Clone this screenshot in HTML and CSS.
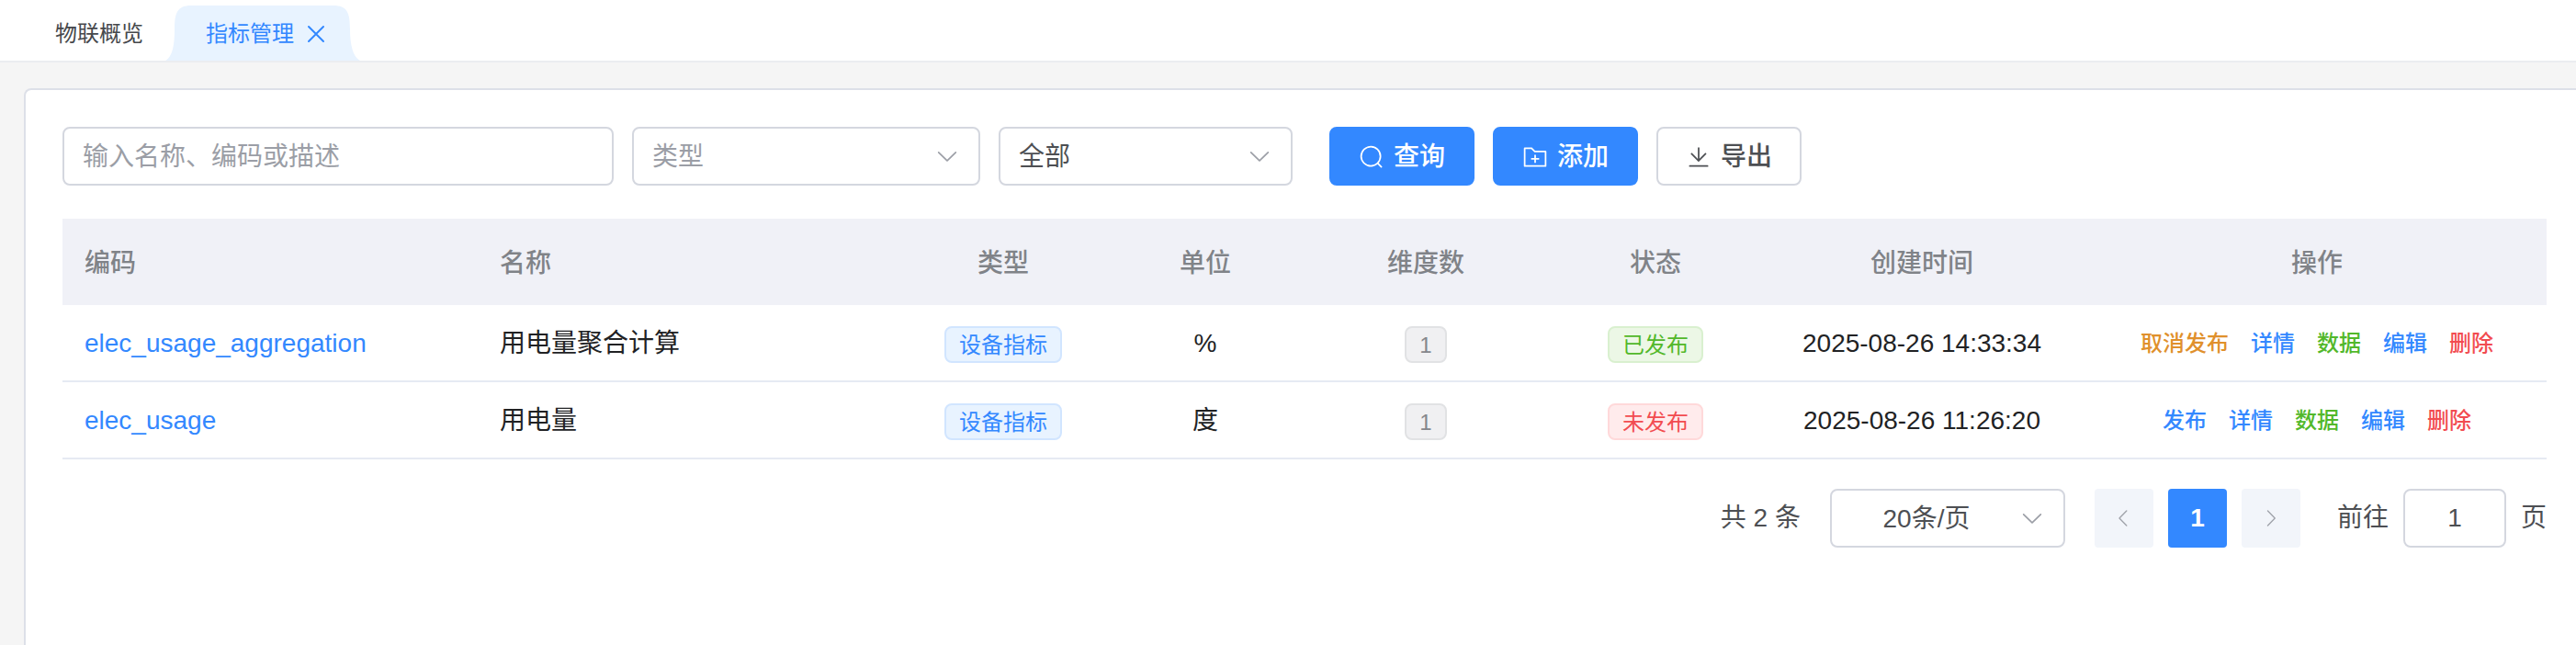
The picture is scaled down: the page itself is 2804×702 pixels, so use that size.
FILE: index.html
```html
<!DOCTYPE html>
<html lang="zh-CN">
<head>
<meta charset="utf-8">
<meta name="viewport" content="width=device-width, initial-scale=1">
<title>指标管理</title>
<link rel="stylesheet" href="styles.css">
</head>
<body>
<svg class="sprite" aria-hidden="true">
  <symbol id="arrow-down" viewBox="0 0 1024 1024"><path d="M831.872 340.864 512 652.672 192.128 340.864a30.592 30.592 0 0 0-42.752 0 29.12 29.12 0 0 0 0 41.6L489.664 714.24a32 32 0 0 0 44.672 0l340.288-331.712a29.12 29.12 0 0 0 0-41.728 30.592 30.592 0 0 0-42.752 0z"/></symbol>
  <symbol id="arrow-left" viewBox="0 0 1024 1024"><path d="M609.408 149.376 277.76 489.6a32 32 0 0 0 0 44.672l331.648 340.352a29.12 29.12 0 0 0 41.728 0 30.592 30.592 0 0 0 0-42.752L339.264 511.936l311.872-319.872a30.592 30.592 0 0 0 0-42.688 29.12 29.12 0 0 0-41.728 0z"/></symbol>
  <symbol id="arrow-right" viewBox="0 0 1024 1024"><path d="M340.864 149.312a30.592 30.592 0 0 0 0 42.752L652.736 512 340.864 831.872a30.592 30.592 0 0 0 0 42.752 29.12 29.12 0 0 0 41.728 0L714.24 534.336a32 32 0 0 0 0-44.672L382.592 149.376a29.12 29.12 0 0 0-41.728 0z"/></symbol>
</svg>

<nav class="tabs">
  <a class="tab" href="#overview">物联概览</a>
  <div class="tab tab-active">
    <svg class="tab-shape" viewBox="0 0 212 60" preserveAspectRatio="none" aria-hidden="true"><path d="M0 60C8 56 10 42 10 26C10 8 13 0 28 0H183C198 0 201 8 201 26C201 42 204 56 212 60Z"/></svg>
    <a class="tab-link" href="#metrics" aria-current="page">指标管理</a>
    <button class="tab-close" type="button" aria-label="关闭"><svg viewBox="0 0 24 24" aria-hidden="true"><path d="M4 4L20 20M20 4L4 20"/></svg></button>
  </div>
</nav>

<main class="page">
  <section class="panel">
    <form class="filters">
      <input class="field keyword" type="text" placeholder="输入名称、编码或描述" aria-label="输入名称、编码或描述">
      <div class="select kind">
        <select class="field is-empty" aria-label="类型"><option>类型</option></select>
        <svg class="icon chevron" aria-hidden="true"><use href="#arrow-down"/></svg>
      </div>
      <div class="select state">
        <select class="field" aria-label="状态"><option>全部</option></select>
        <svg class="icon chevron" aria-hidden="true"><use href="#arrow-down"/></svg>
      </div>
      <div class="actions">
        <button class="btn btn-primary" type="button"><svg class="icon" viewBox="0 0 1024 1024" aria-hidden="true"><path d="m795.904 750.72 124.992 124.928a32 32 0 0 1-45.248 45.248L750.656 795.904a416 416 0 1 1 45.248-45.248zM480 832a352 352 0 1 0 0-704 352 352 0 0 0 0 704z"/></svg>查询</button>
        <button class="btn btn-primary" type="button"><svg class="icon" viewBox="0 0 1024 1024" aria-hidden="true"><path d="M128 192v640h768V320H485.76L357.504 192zm-32-64h287.872l128.384 128H928a32 32 0 0 1 32 32v576a32 32 0 0 1-32 32H96a32 32 0 0 1-32-32V160a32 32 0 0 1 32-32m384 416V416h64v128h128v64H544v128h-64V608H352v-64z"/></svg>添加</button>
        <button class="btn" type="button"><svg class="icon" viewBox="0 0 1024 1024" aria-hidden="true"><path d="M160 832h704a32 32 0 1 1 0 64H160a32 32 0 1 1 0-64m384-253.696 236.288-236.352 45.248 45.248L508.8 704 192 387.2l45.248-45.248L480 584.704V128h64z"/></svg>导出</button>
      </div>
    </form>

    <table class="table">
      <colgroup>
        <col><col><col class="col-kind"><col class="col-unit"><col class="col-dims"><col class="col-state"><col class="col-time"><col class="col-ops">
      </colgroup>
      <thead>
        <tr><th class="left">编码</th><th class="left">名称</th><th>类型</th><th>单位</th><th>维度数</th><th>状态</th><th>创建时间</th><th>操作</th></tr>
      </thead>
      <tbody>
        <tr>
          <td class="left"><a class="code" href="#elec_usage_aggregation">elec_usage_aggregation</a></td>
          <td class="left">用电量聚合计算</td>
          <td><span class="tag tag-primary">设备指标</span></td>
          <td>%</td>
          <td><span class="tag tag-info">1</span></td>
          <td><span class="tag tag-success">已发布</span></td>
          <td>2025-08-26 14:33:34</td>
          <td><div class="ops"><button class="op warning" type="button">取消发布</button><button class="op" type="button">详情</button><button class="op success" type="button">数据</button><button class="op" type="button">编辑</button><button class="op danger" type="button">删除</button></div></td>
        </tr>
        <tr>
          <td class="left"><a class="code" href="#elec_usage">elec_usage</a></td>
          <td class="left">用电量</td>
          <td><span class="tag tag-primary">设备指标</span></td>
          <td>度</td>
          <td><span class="tag tag-info">1</span></td>
          <td><span class="tag tag-danger">未发布</span></td>
          <td>2025-08-26 11:26:20</td>
          <td><div class="ops"><button class="op" type="button">发布</button><button class="op" type="button">详情</button><button class="op success" type="button">数据</button><button class="op" type="button">编辑</button><button class="op danger" type="button">删除</button></div></td>
        </tr>
      </tbody>
    </table>

    <div class="pagination">
      <span>共 2 条</span>
      <div class="select size">
        <select class="field" aria-label="每页条数"><option>20条/页</option></select>
        <svg class="icon chevron" aria-hidden="true"><use href="#arrow-down"/></svg>
      </div>
      <div class="pager">
        <button class="page-btn" type="button" disabled aria-label="上一页"><svg class="icon-small" aria-hidden="true"><use href="#arrow-left"/></svg></button>
        <button class="page-btn page-current" type="button" aria-current="page">1</button>
        <button class="page-btn" type="button" disabled aria-label="下一页"><svg class="icon-small" aria-hidden="true"><use href="#arrow-right"/></svg></button>
      </div>
      <div class="jump">
        <label for="jump">前往</label>
        <input class="field" id="jump" type="text" value="1">
        <span>页</span>
      </div>
    </div>
  </section>
</main>
</body>
</html>
```
FILE: styles.css
```css
:root {
  --primary: #3388ff;
  --success: #52b82a;
  --warning: #e0902c;
  --danger: #f24c50;
  --text: #212224;
  --text-regular: #4d4f53;
  --text-muted: #808388;
  --placeholder: #9b9ea6;
  --border: #d4d7df;
}

*,
*::before,
*::after {
  box-sizing: border-box;
}

body {
  margin: 0;
  min-height: 100vh;
  display: flex;
  flex-direction: column;
  background: #f5f5f5;
  color: var(--text);
  font: 28px/40px "Liberation Sans", "Noto Sans CJK SC", sans-serif;
}

button,
input,
select {
  font: inherit;
  margin: 0;
}

button {
  padding: 0;
  border: 0;
  background: none;
  cursor: pointer;
}

a {
  text-decoration: none;
}

.sprite {
  position: absolute;
  width: 0;
  height: 0;
}

.icon {
  width: 28px;
  height: 28px;
  fill: currentColor;
}

.icon-small {
  width: 24px;
  height: 24px;
  fill: currentColor;
}

/* Tab bar */
.tabs {
  display: flex;
  height: 68px;
  padding: 6px 0 0 36px;
  background: #fff;
  border-bottom: 2px solid #ebedf0;
  font-size: 24px;
}

.tab {
  display: flex;
  align-items: center;
  padding: 2px 24px 0;
  color: #46484c;
}

.tab-active {
  position: relative;
  gap: 12px;
  padding: 2px 36px 0 44px;
}

.tab-shape {
  position: absolute;
  inset: 0;
  width: 100%;
  height: 100%;
  fill: #e8f3ff;
}

.tab-link,
.tab-close {
  position: relative;
  color: var(--primary);
}

.tab-close {
  display: flex;
}

.tab-close svg {
  width: 24px;
  height: 24px;
  fill: none;
  stroke: currentColor;
  stroke-width: 2;
  stroke-linecap: round;
}

/* Panel */
.page {
  flex: 1;
  display: flex;
  padding: 28px 0 0 26px;
}

.panel {
  flex: 1;
  min-width: 0;
  padding: 40px 32px 0 40px;
  background: #fff;
  border: 2px solid #dde0e8;
  border-width: 2px 0 0 2px;
  border-radius: 8px 0 0 0;
}

.field {
  width: 100%;
  height: 64px;
  padding: 2px 22px 0 20px;
  border: 2px solid var(--border);
  border-radius: 8px;
  background: #fff;
  color: var(--text-regular);
  outline: 0;
  appearance: none;
}

.field::placeholder {
  color: var(--placeholder);
  opacity: 1;
}

.field.is-empty {
  color: var(--placeholder);
}

.select {
  display: grid;
  align-items: center;
}

.select > * {
  grid-area: 1 / 1;
}

.chevron {
  justify-self: end;
  margin-right: 22px;
  color: var(--placeholder);
  pointer-events: none;
}

.filters {
  display: flex;
  flex-wrap: wrap;
  gap: 20px;
  margin-bottom: 36px;
}

.keyword {
  width: 600px;
}

.kind {
  width: 379px;
}

.state {
  width: 320px;
}

.actions {
  display: flex;
  gap: 20px;
  margin-left: 20px;
}

.btn {
  display: flex;
  align-items: center;
  gap: 10px;
  height: 64px;
  padding: 2px 30px 0;
  border: 2px solid var(--border);
  border-radius: 8px;
  background: #fff;
  color: var(--text-regular);
  font-weight: 500;
}

.btn-primary {
  border-color: var(--primary);
  background: var(--primary);
  color: #fff;
}

/* Table */
.table {
  width: 100%;
  table-layout: fixed;
  border-collapse: separate;
  border-spacing: 0;
  text-align: center;
}

.col-kind { width: 240px; }
.col-unit { width: 200px; }
.col-dims { width: 280px; }
.col-state { width: 220px; }
.col-time { width: 360px; }
.col-ops { width: 500px; }

.table th {
  height: 94px;
  padding: 4px 24px 0;
  background: #f0f1f7;
  color: var(--text-muted);
  font-weight: 500;
}

.table td {
  height: 84px;
  padding: 2px 24px 0;
  border-bottom: 2px solid #e6eaf3;
}

.table .left {
  text-align: left;
}

.code {
  color: var(--primary);
  font-weight: 500;
}

.tag {
  display: inline-block;
  vertical-align: middle;
  height: 40px;
  padding: 0 14px;
  border: 2px solid;
  border-radius: 8px;
  font-size: 24px;
  line-height: 38px;
}

.tag-primary { color: var(--primary); background: #e8f3ff; border-color: #d1e5ff; }
.tag-info { color: #85878c; background: #f0f0f2; border-color: #e1e2e4; }
.tag-success { color: var(--success); background: #ecf7e6; border-color: #d9f0cf; }
.tag-danger { color: var(--danger); background: #ffebec; border-color: #ffd9da; }

.ops {
  display: flex;
  justify-content: center;
  gap: 24px;
}

.op {
  color: var(--primary);
  font-size: 24px;
  font-weight: 500;
}

.op.warning { color: var(--warning); }
.op.success { color: var(--success); }
.op.danger { color: var(--danger); }

/* Pagination */
.pagination {
  display: flex;
  align-items: center;
  justify-content: flex-end;
  gap: 32px;
  margin-top: 32px;
  color: var(--text-regular);
}

.size {
  width: 256px;
}

.size .field {
  padding-right: 66px;
  text-align-last: center;
}

.pager,
.jump {
  display: flex;
  align-items: center;
  gap: 16px;
}

.jump {
  margin-left: 8px;
}

.page-btn {
  display: flex;
  align-items: center;
  justify-content: center;
  width: 64px;
  height: 64px;
  border-radius: 4px;
  background: #f2f5fa;
  color: #a0a3aa;
}

.page-current {
  background: var(--primary);
  color: #fff;
  font-weight: 700;
}

.jump .field {
  width: 112px;
  padding: 0 8px;
  text-align: center;
}
```
